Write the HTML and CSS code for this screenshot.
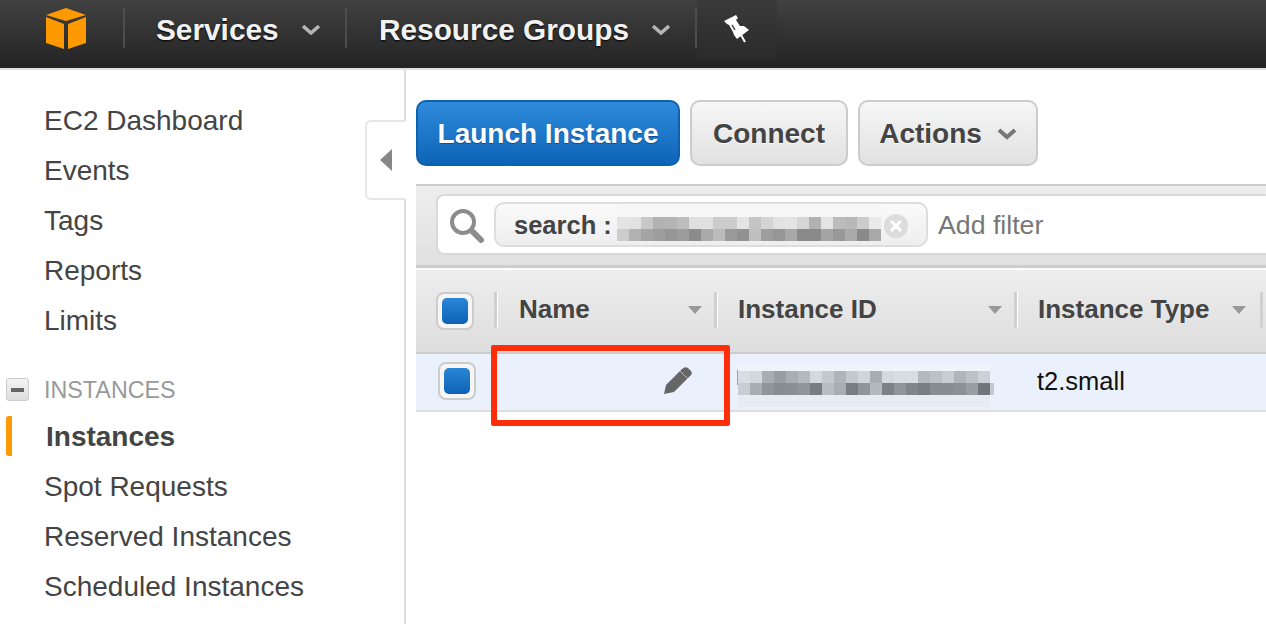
FILE: index.html
```html
<!doctype html>
<html>
<head>
  <meta charset="utf-8">
  <title>EC2 Instances</title>
  <link rel="stylesheet" href="styles.css">
</head>
<body>
  <header class="topbar">
    <div class="logo">
      <svg width="40" height="41" viewBox="0 0 40 41">
        <polygon fill="#f90" points="20,0 40,7 20,13 0,7"/>
        <polygon fill="#f90" points="0,9 18,16 18,41 0,35"/>
        <polygon fill="#f90" points="40,9 22,16 22,41 40,35"/>
      </svg>
    </div>
    <div class="nav-sep"></div>
    <div class="nav-item nav-services">
      <span>Services</span>
      <svg class="nav-caret" width="18" height="10" viewBox="0 0 18 10"><polyline points="1,1 9,8 17,1" fill="none" stroke="#b4b4b4" stroke-width="3.5"/></svg>
    </div>
    <div class="nav-sep"></div>
    <div class="nav-item nav-groups">
      <span>Resource Groups</span>
      <svg class="nav-caret" width="18" height="10" viewBox="0 0 18 10"><polyline points="1,1 9,8 17,1" fill="none" stroke="#b4b4b4" stroke-width="3.5"/></svg>
    </div>
    <div class="nav-sep"></div>
    <div class="nav-pin">
      <svg width="26" height="28" viewBox="0 0 26 28">
        <path fill="#fff" d="M0 6 L12 0 L14 3 L12 5 L16 11 L20 11 L25 15 L13 24 L10 20 L9 17 L5 10 L3 9 Z"/>
        <path d="M17 20 L21 27" stroke="#fff" stroke-width="2"/>
        <path d="M8 10 L11 15" stroke="#555" stroke-width="1.5"/>
      </svg>
    </div>
  </header>

  <div class="page">
    <aside class="sidebar">
      <ul class="side-list">
        <li>EC2 Dashboard</li>
        <li>Events</li>
        <li>Tags</li>
        <li>Reports</li>
        <li>Limits</li>
      </ul>
      <div class="side-group">
        <span class="side-toggle"><span class="side-minus"></span></span>
        <span>INSTANCES</span>
      </div>
      <ul class="side-list">
        <li class="active">Instances</li>
        <li>Spot Requests</li>
        <li>Reserved Instances</li>
        <li>Scheduled Instances</li>
      </ul>
      <div class="collapse-tab"><span class="collapse-arrow"></span></div>
    </aside>

    <main class="content">
      <div class="toolbar">
        <button class="btn btn-primary">Launch Instance</button>
        <button class="btn btn-connect">Connect</button>
        <button class="btn btn-actions">
          <span>Actions</span>
          <svg width="20" height="12" viewBox="0 0 20 12"><polyline points="2,2 10,9 18,2" fill="none" stroke="#777" stroke-width="4"/></svg>
        </button>
      </div>

      <div class="filter-bar">
        <div class="filter-box">
          <svg class="search-icon" width="36" height="36" viewBox="0 0 36 36">
            <circle cx="14" cy="14" r="11" fill="none" stroke="#8c8c8c" stroke-width="4"/>
            <line x1="23" y1="23" x2="32" y2="32" stroke="#8c8c8c" stroke-width="6" stroke-linecap="round"/>
          </svg>
          <div class="token">
            <span class="token-label">search :</span>
            <svg class="mosaic" width="264" height="36" viewBox="0 0 264 36" shape-rendering="crispEdges">
              <rect x="0" y="0" width="264" height="12" fill="#f6f6f6"/>
              <rect x="0" y="12" width="12" height="12" fill="#e4e4e4"/><rect x="12" y="12" width="12" height="12" fill="#e2e2e2"/><rect x="24" y="12" width="12" height="12" fill="#c8c8c8"/><rect x="36" y="12" width="12" height="12" fill="#b2b2b2"/><rect x="48" y="12" width="12" height="12" fill="#b4b4b4"/><rect x="60" y="12" width="12" height="12" fill="#bcbcbc"/><rect x="72" y="12" width="12" height="12" fill="#e0e0e0"/><rect x="84" y="12" width="12" height="12" fill="#e0e0e0"/><rect x="96" y="12" width="12" height="12" fill="#cccccc"/><rect x="108" y="12" width="12" height="12" fill="#cccccc"/><rect x="120" y="12" width="12" height="12" fill="#e4e4e4"/><rect x="132" y="12" width="12" height="12" fill="#c4c4c4"/><rect x="144" y="12" width="12" height="12" fill="#d4d4d4"/><rect x="156" y="12" width="12" height="12" fill="#e2e2e2"/><rect x="168" y="12" width="12" height="12" fill="#e4e4e4"/><rect x="180" y="12" width="12" height="12" fill="#d6d6d6"/><rect x="192" y="12" width="12" height="12" fill="#b2b2b2"/><rect x="204" y="12" width="12" height="12" fill="#e4e4e4"/><rect x="216" y="12" width="12" height="12" fill="#bcbcbc"/><rect x="228" y="12" width="12" height="12" fill="#b8b8b8"/><rect x="240" y="12" width="12" height="12" fill="#cccccc"/><rect x="252" y="12" width="12" height="12" fill="#eaeaea"/>
              <rect x="0" y="24" width="12" height="12" fill="#cccccc"/><rect x="12" y="24" width="12" height="12" fill="#b2b2b2"/><rect x="24" y="24" width="12" height="12" fill="#a4a4a4"/><rect x="36" y="24" width="12" height="12" fill="#9e9e9e"/><rect x="48" y="24" width="12" height="12" fill="#969696"/><rect x="60" y="24" width="12" height="12" fill="#9c9c9c"/><rect x="72" y="24" width="12" height="12" fill="#8c8c8c"/><rect x="84" y="24" width="12" height="12" fill="#aaaaaa"/><rect x="96" y="24" width="12" height="12" fill="#bcbcbc"/><rect x="108" y="24" width="12" height="12" fill="#9a9a9a"/><rect x="120" y="24" width="12" height="12" fill="#929292"/><rect x="132" y="24" width="12" height="12" fill="#c0c0c0"/><rect x="144" y="24" width="12" height="12" fill="#9e9e9e"/><rect x="156" y="24" width="12" height="12" fill="#969696"/><rect x="168" y="24" width="12" height="12" fill="#a8a8a8"/><rect x="180" y="24" width="12" height="12" fill="#8a8a8a"/><rect x="192" y="24" width="12" height="12" fill="#8a8a8a"/><rect x="204" y="24" width="12" height="12" fill="#a4a4a4"/><rect x="216" y="24" width="12" height="12" fill="#989898"/><rect x="228" y="24" width="12" height="12" fill="#aaaaaa"/><rect x="240" y="24" width="12" height="12" fill="#8a8a8a"/><rect x="252" y="24" width="12" height="12" fill="#a8a8a8"/>
            </svg>
            <svg class="token-x" width="24" height="24" viewBox="0 0 24 24">
              <circle cx="12" cy="12" r="12" fill="#dcdcdc"/>
              <path d="M7 7 L17 17 M17 7 L7 17" stroke="#fff" stroke-width="3"/>
            </svg>
          </div>
          <span class="add-filter">Add filter</span>
        </div>
      </div>

      <div class="table-head">
        <div class="cell-check"><span class="check"><span class="check-fill"></span></span></div>
        <div class="col col-name"><span>Name</span><span class="sort"></span></div>
        <div class="col col-id"><span>Instance ID</span><span class="sort"></span></div>
        <div class="col col-type"><span>Instance Type</span><span class="sort"></span></div>
      </div>

      <div class="table-row">
        <div class="cell-check row-check"><span class="check"><span class="check-fill"></span></span></div>
        <div class="cell-name">
          <svg width="28" height="28" viewBox="0 0 28 28">
            <path fill="#666" d="M0 28 L2 19 L18 3 Q21 0 24 2 L27 5 Q29 8 26 10 L10 26 Z"/>
            <path d="M16 5 L24 13" stroke="#eaf1fc" stroke-width="1" opacity=".6"/>
          </svg>
        </div>
        <div class="cell-id">
          <svg width="257" height="44" viewBox="0 0 257 44" shape-rendering="crispEdges">
            <rect x="0" y="7" width="1" height="15" fill="#9aa0a8"/>
            <g transform="translate(1 0)">
            <rect x="0" y="0" width="252" height="8" fill="#eef3fc"/>
            <rect x="0" y="8" width="12" height="12" fill="#d8dde4"/><rect x="12" y="8" width="12" height="12" fill="#d2d7de"/><rect x="24" y="8" width="12" height="12" fill="#a8adb4"/><rect x="36" y="8" width="12" height="12" fill="#989da4"/><rect x="48" y="8" width="12" height="12" fill="#a8adb4"/><rect x="60" y="8" width="12" height="12" fill="#b4b9c0"/><rect x="72" y="8" width="12" height="12" fill="#d4d9e0"/><rect x="84" y="8" width="12" height="12" fill="#c4c9d0"/><rect x="96" y="8" width="12" height="12" fill="#b0b5bc"/><rect x="108" y="8" width="12" height="12" fill="#c4c9d0"/><rect x="120" y="8" width="12" height="12" fill="#d0d5dc"/><rect x="132" y="8" width="12" height="12" fill="#a8adb4"/><rect x="144" y="8" width="12" height="12" fill="#d4d9e0"/><rect x="156" y="8" width="12" height="12" fill="#d8dde4"/><rect x="168" y="8" width="12" height="12" fill="#d8dde4"/><rect x="180" y="8" width="12" height="12" fill="#b4b9c0"/><rect x="192" y="8" width="12" height="12" fill="#bcc1c8"/><rect x="204" y="8" width="12" height="12" fill="#c8cdd4"/><rect x="216" y="8" width="12" height="12" fill="#b0b5bc"/><rect x="228" y="8" width="12" height="12" fill="#bcc1c8"/><rect x="240" y="8" width="12" height="12" fill="#ccd1d8"/>
            <rect x="0" y="20" width="12" height="12" fill="#c8cdd4"/><rect x="12" y="20" width="12" height="12" fill="#a8adb4"/><rect x="24" y="20" width="12" height="12" fill="#90959c"/><rect x="36" y="20" width="12" height="12" fill="#888d94"/><rect x="48" y="20" width="12" height="12" fill="#8a8f96"/><rect x="60" y="20" width="12" height="12" fill="#90959c"/><rect x="72" y="20" width="12" height="12" fill="#787d84"/><rect x="84" y="20" width="12" height="12" fill="#b8bdc4"/><rect x="96" y="20" width="12" height="12" fill="#a8adb4"/><rect x="108" y="20" width="12" height="12" fill="#787d84"/><rect x="120" y="20" width="12" height="12" fill="#90959c"/><rect x="132" y="20" width="12" height="12" fill="#b4b9c0"/><rect x="144" y="20" width="12" height="12" fill="#7c8188"/><rect x="156" y="20" width="12" height="12" fill="#90959c"/><rect x="168" y="20" width="12" height="12" fill="#80858c"/><rect x="180" y="20" width="12" height="12" fill="#787d84"/><rect x="192" y="20" width="12" height="12" fill="#888d94"/><rect x="204" y="20" width="12" height="12" fill="#888d94"/><rect x="216" y="20" width="12" height="12" fill="#8c9198"/><rect x="228" y="20" width="12" height="12" fill="#989da4"/><rect x="240" y="20" width="12" height="12" fill="#70757c"/><rect x="252" y="20" width="4" height="12" fill="#c4c9d0"/>
            <rect x="0" y="32" width="252" height="12" fill="#e6ebf4"/>
            </g>
          </svg>
        </div>
        <div class="cell-type">t2.small</div>
      </div>

      <div class="highlight"></div>
    </main>
  </div>
</body>
</html>
```

FILE: styles.css
```css
* {
  box-sizing: border-box;
}
html, body {
  margin: 0;
  height: 624px;
  overflow: hidden;
  background: #fff;
  font-family: "Liberation Sans", Arial, sans-serif;
  color: #444;
}

/* top bar */
.topbar {
  display: flex;
  height: 70px;
  border-bottom: 2px solid #e0e0e0;
  background: linear-gradient(#414141, #232323);
}
.logo {
  width: 123px;
  padding: 8px 0 0 46px;
}
.logo svg, .nav-caret, .search-icon, .token-x {
  display: block;
}
.logo svg, .nav-pin svg {
  filter: blur(.4px);
}
.nav-sep {
  width: 2px;
  height: 40px;
  margin-top: 8px;
  background: #4d4d4d;
}
.nav-item {
  display: flex;
  align-items: center;
  height: 60px;
  padding-left: 31px;
  font-size: 29.8px;
  font-weight: bold;
  color: #f2f2f2;
  text-shadow: 0 1px 2px #000;
}
.nav-services {
  width: 220px;
}
.nav-groups {
  width: 348px;
  padding-left: 32px;
}
.nav-caret {
  margin-left: 23px;
}
.nav-pin {
  width: 80px;
  height: 60px;
  padding: 15px 0 0 27px;
  background: linear-gradient(#3a3a3a, #2a2a2a);
}
.nav-pin svg {
  display: block;
}

.page {
  display: flex;
  height: 554px;
}

/* left menu */
.sidebar {
  position: relative;
  width: 406px;
  flex: none;
  padding-top: 26px;
  border-right: 2px solid #ddd;
}
.side-list {
  list-style: none;
  margin: 0;
  padding: 0;
}
.side-list li {
  position: relative;
  height: 50px;
  padding-left: 44px;
  font-size: 28px;
  line-height: 50px;
  color: #444;
}
.side-list li.active {
  padding-left: 46px;
  font-weight: bold;
}
.side-list li.active::before {
  content: "";
  position: absolute;
  left: 6px;
  top: 4px;
  width: 6px;
  height: 40px;
  background: #f90;
  border-radius: 3px 0 0 3px;
}
.side-group {
  display: flex;
  align-items: center;
  height: 66px;
  padding: 22px 0 0 6px;
  font-size: 23.3px;
  color: #999;
}
.side-toggle {
  display: flex;
  align-items: center;
  justify-content: center;
  width: 23px;
  height: 23px;
  margin: -1px 15px 0 0;
  border: 1px solid #ccc;
  border-radius: 3px;
  background: linear-gradient(#f4f4f4, #ddd);
}
.side-minus {
  width: 13px;
  height: 4px;
  background: #666;
}
.collapse-tab {
  position: absolute;
  left: 365px;
  top: 50px;
  display: flex;
  align-items: center;
  width: 41px;
  height: 80px;
  padding-left: 13px;
  background: #fff;
  border: 2px solid #e6e6e6;
  border-right: 0;
  border-radius: 6px 0 0 6px;
}
.collapse-arrow {
  border-style: solid;
  border-width: 11px 12px 11px 0;
  border-color: transparent #888 transparent transparent;
}

/* main area */
.content {
  position: relative;
  flex: 1;
  min-width: 0;
  padding: 30px 0 0 10px;
  overflow: hidden;
}
.toolbar {
  display: flex;
  gap: 10px;
  height: 66px;
}
.btn {
  display: flex;
  align-items: center;
  justify-content: center;
  gap: 15px;
  height: 66px;
  padding: 2px 0 0;
  font: bold 28px "Liberation Sans", Arial, sans-serif;
  color: #444;
  border: 2px solid #ccc;
  border-radius: 10px;
  background: linear-gradient(#f6f6f6, #e1e1e1);
  text-shadow: 0 1px 0 #fff;
}
.btn-primary {
  width: 264px;
  color: #fff;
  border-color: #0d62ae;
  background: linear-gradient(#2f8bdc, #0e64b6);
  text-shadow: 0 1px 1px #0a4d8c;
}
.btn-connect {
  width: 158px;
}
.btn-actions {
  width: 180px;
}
.filter-bar {
  margin-top: 18px;
  width: 900px;
  height: 84px;
  padding: 8px 0 0 20px;
  border-top: 2px solid #ccc;
  border-bottom: 3px solid #ccc;
  background: linear-gradient(#eee, #e0e0e0);
}
.filter-box {
  display: flex;
  align-items: center;
  width: 900px;
  height: 61px;
  padding-left: 11px;
  background: #fff;
  border: 2px solid #d9d9d9;
  border-radius: 8px 0 0 8px;
}
.search-icon {
  margin-top: 2px;
}
.token {
  display: flex;
  align-items: center;
  width: 434px;
  height: 45px;
  margin-left: 9px;
  padding-left: 18px;
  border: 2px solid #ddd;
  border-radius: 10px;
  background: linear-gradient(#fafafa, #eee);
}
.token-label {
  padding-top: 2px;
  font-size: 25.5px;
  font-weight: bold;
}
.mosaic {
  margin: 0 0 4px 5px;
}
.token-x {
  margin: 3px 0 0 3px;
}
.add-filter {
  margin-left: 10px;
  padding-top: 2px;
  font-size: 26.7px;
  color: #777;
}

/* table */
.table-head {
  display: flex;
  width: 900px;
  height: 86px;
  padding-top: 22px;
  border-top: 2px solid #fff;
  border-bottom: 2px solid #ccc;
  background: linear-gradient(#eee, #ddd);
  font-size: 26px;
  font-weight: bold;
}
.cell-check {
  width: 78px;
  flex: none;
  padding-left: 20px;
}
.check {
  display: block;
  width: 38px;
  height: 38px;
  padding: 4px;
  border: 2px solid #ccc;
  border-radius: 8px;
  background: #f6f6f6;
}
.check-fill {
  display: block;
  width: 26px;
  height: 26px;
  border-radius: 5px;
  background: linear-gradient(#2a86d8, #0d62b4);
}
.col {
  position: relative;
  display: flex;
  justify-content: space-between;
  height: 36px;
  line-height: 34px;
  padding-left: 21px;
  border-left: 3px solid #d0d0d0;
  box-shadow: inset 1px 0 0 #fff;
}
.col-name {
  width: 220px;
  padding: 0 12px 0 22px;
}
.col-id {
  width: 300px;
  padding-right: 12px;
}
.col-type {
  width: 249px;
  padding-right: 14px;
  border-right: 3px solid #d0d0d0;
}
.sort {
  margin-top: 14px;
  border-style: solid;
  border-width: 8px 7px 0 7px;
  border-color: #999 transparent transparent transparent;
  height: 0;
}
.table-row {
  display: flex;
  width: 900px;
  height: 58px;
  border-bottom: 2px solid #ddd;
  background: #eaf1fc;
  font-size: 25.5px;
  color: #111;
}
.row-check {
  width: 80px;
  padding: 8px 0 0 22px;
}
.cell-name {
  width: 240px;
  flex: none;
  display: flex;
  justify-content: flex-end;
  padding: 12px 44px 0 0;
}
.cell-id {
  width: 300px;
  flex: none;
  padding-top: 9px;
  margin-left: 1px;
}
.cell-id svg {
  display: block;
}
.cell-type {
  line-height: 54px;
}
.highlight {
  position: absolute;
  left: 85px;
  top: 275px;
  width: 239px;
  height: 81px;
  border: 6px solid #ff2d0a;
  border-radius: 2px;
}
```
